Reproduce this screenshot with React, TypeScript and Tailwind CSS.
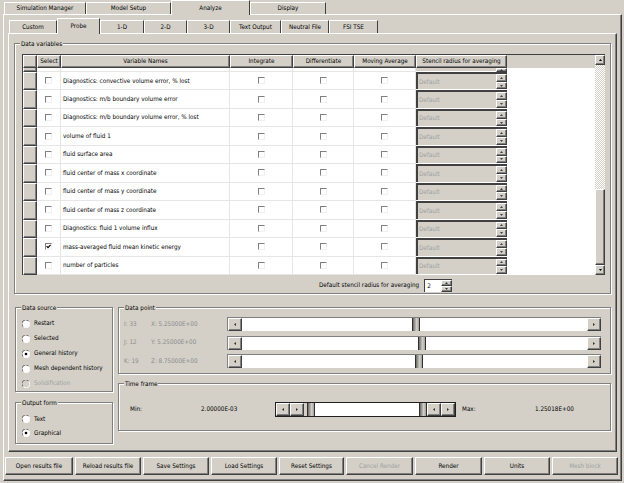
import React from "react";

const raised =
  "border border-t-white border-l-white border-r-[#404040] border-b-[#404040] shadow-[inset_-1px_-1px_0_#808080]";

const variables = [
  "Diagnostics: convective volume error, % lost",
  "Diagnostics: m/b boundary volume error",
  "Diagnostics: m/b boundary volume error, % lost",
  "volume of fluid 1",
  "fluid surface area",
  "fluid center of mass x coordinate",
  "fluid center of mass y coordinate",
  "fluid center of mass z coordinate",
  "Diagnostics: fluid 1 volume influx",
  "mass-averaged fluid mean kinetic energy",
  "number of particles",
];

const mainTabs = [
  { label: "Simulation Manager", w: "w-[82px]" },
  { label: "Model Setup", w: "w-[85px]" },
  { label: "Analyze", w: "w-[79px]", active: true },
  { label: "Display", w: "w-[76px]" },
];

const subTabs = [
  { label: "Custom", w: "w-[48px]" },
  { label: "Probe", w: "w-[43px]", active: true },
  { label: "1-D", w: "w-[44px]" },
  { label: "2-D", w: "w-[43px]" },
  { label: "3-D", w: "w-[43px]" },
  { label: "Text Output", w: "w-[51px]" },
  { label: "Neutral File", w: "w-[48px]" },
  { label: "FSI TSE", w: "w-[49px]" },
];

const buttons = [
  { label: "Open results file", w: "w-[68px]" },
  { label: "Reload results file", w: "w-[66px]" },
  { label: "Save Settings", w: "w-[66px]" },
  { label: "Load Settings", w: "w-[66px]" },
  { label: "Reset Settings", w: "w-[65px]" },
  { label: "Cancel Render", w: "w-[67px]", disabled: true },
  { label: "Render", w: "w-[67px]" },
  { label: "Units", w: "w-[66px]" },
  { label: "Mesh block", w: "w-[66px]", disabled: true },
];

// small triangles used on scroll / spin buttons
function Tri({
  dir,
  small,
  color = "#000",
}: {
  dir: "up" | "down" | "left" | "right";
  small?: boolean;
  color?: string;
}) {
  const horiz = dir === "up" || dir === "down";
  const a = small ? 3 : 5;
  const b = small ? 2 : 3;
  const d = {
    up: `M0 ${b} L${a / 2} 0 L${a} ${b} Z`,
    down: `M0 0 L${a} 0 L${a / 2} ${b} Z`,
    left: `M${b} 0 L${b} ${a} L0 ${a / 2} Z`,
    right: `M0 0 L${b} ${a / 2} L0 ${a} Z`,
  }[dir];
  const w = horiz ? a : b;
  const h = horiz ? b : a;
  return (
    <svg width={w} height={h} viewBox={`0 0 ${w} ${h}`}>
      <path d={d} fill={color} />
    </svg>
  );
}

function Check({ checked }: { checked?: boolean }) {
  return (
    <span className="relative block h-[7px] w-[7px] border border-t-[#808080] border-l-[#808080] border-r-[#f0f0f0] border-b-[#f0f0f0] bg-white">
      {checked && (
        <svg className="absolute left-0 top-0" width="5" height="5" viewBox="0 0 5 5">
          <path d="M0.6 2.2 L2 3.6 L4.6 0.8" stroke="#000" strokeWidth="1.2" fill="none" />
        </svg>
      )}
    </span>
  );
}

function Radio({ on, disabled }: { on?: boolean; disabled?: boolean }) {
  return (
    <svg width="8" height="8" viewBox="0 0 8 8" className="shrink-0">
      <circle cx="4" cy="4" r="3.5" fill={disabled ? "#d4d0c8" : "#fff"} />
      <path d="M1 6.5 A3.5 3.5 0 0 1 6.5 1" stroke="#707070" strokeWidth="1" fill="none" />
      <path d="M6.8 1.6 A3.5 3.5 0 0 1 1.6 6.8" stroke="#fff" strokeWidth="1" fill="none" />
      {on && <circle cx="4" cy="4" r="1.3" fill="#000" />}
    </svg>
  );
}

function Spin() {
  return (
    <div className="flex h-full w-[11px] shrink-0 flex-col">
      <div className={`flex flex-1 items-center justify-center bg-[#d4d0c8] ${raised}`}>
        <Tri dir="up" small color="#404040" />
      </div>
      <div className={`flex flex-1 items-center justify-center bg-[#d4d0c8] ${raised}`}>
        <Tri dir="down" small color="#404040" />
      </div>
    </div>
  );
}

function Group({
  label,
  className,
  children,
}: {
  label: string;
  className: string;
  children?: React.ReactNode;
}) {
  return (
    <div
      className={`relative border border-[#808080] shadow-[inset_1px_1px_0_#fff,1px_1px_0_#fff] ${className}`}
    >
      <span className="absolute -top-[4px] left-[5px] bg-[#d4d0c8] px-[1px] leading-[7px]">
        {label}
      </span>
      {children}
    </div>
  );
}

function ArrowBtn({ dir }: { dir: "left" | "right" }) {
  return (
    <div className={`flex h-full w-[14px] shrink-0 items-center justify-center bg-[#d4d0c8] ${raised}`}>
      <Tri dir={dir} small color="#303030" />
    </div>
  );
}

function Thumb() {
  return (
    <div className="h-full w-[8px] shrink-0 border-x border-[#303030] bg-[linear-gradient(90deg,#6a6a6a,#d4d0c8_60%,#a0a0a0)]" />
  );
}

function AxisRow({ idx, coord, thumb }: { idx: string; coord: string; thumb: string }) {
  return (
    <div className="flex h-[14px] items-center text-[#8a8a8a]">
      <span className="w-[32px] pl-[5px]">{idx}</span>
      <span className="w-[76px]">{coord}</span>
      <div className="flex h-full w-[374px] border-t border-l border-[#808080]">
        <ArrowBtn dir="left" />
        <div className="flex flex-1 bg-white">
          <div className={thumb} />
          <Thumb />
        </div>
        <ArrowBtn dir="right" />
      </div>
    </div>
  );
}

function StencilCell({ partial }: { partial?: boolean }) {
  return (
    <div className="w-[91px] shrink-0 bg-white pb-[1px]">
      <div
        className={`flex h-full bg-[#d4d0c8] ${
          partial ? "" : "border-t-2 border-l-2 border-[#404040]"
        }`}
      >
        <span className="flex flex-1 items-center pl-[1px] text-[#a0a0a0]">
          {partial ? "" : "Default"}
        </span>
        <Spin />
      </div>
    </div>
  );
}

function Row({ name, checked }: { name: string; checked?: boolean }) {
  const cell = "flex items-center justify-center border-r border-b border-[#e6e6e6] bg-white";
  return (
    <div className="flex h-[18.5px]">
      <div className={`w-[14px] shrink-0 bg-[#d4d0c8] ${raised}`} />
      <div className={`w-[24px] shrink-0 ${cell}`}>
        <Check checked={checked} />
      </div>
      <div className={`w-[169px] shrink-0 !justify-start pl-[2px] ${cell}`}>{name}</div>
      <div className={`w-[63px] shrink-0 ${cell}`}>
        <Check />
      </div>
      <div className={`w-[61px] shrink-0 ${cell}`}>
        <Check />
      </div>
      <div className={`w-[62px] shrink-0 ${cell}`}>
        <Check />
      </div>
      <StencilCell />
      <div className="flex-1 bg-white" />
    </div>
  );
}

export default function App() {
  const head = `flex items-center justify-center bg-[#d4d0c8] ${raised}`;
  return (
    <div className="h-[483px] w-[624px] overflow-hidden bg-[#d4d0c8] font-['DejaVu_Sans_Condensed','DejaVu_Sans',sans-serif] text-[6.3px] leading-none text-black">
      {/* main tabs */}
      <div className="ml-[4px] flex h-[14px] items-end">
        {mainTabs.map((t) =>
          t.active ? (
            <div
              key={t.label}
              className={`relative z-10 -mb-[1px] flex h-[15px] items-center justify-center border-t border-l border-r border-t-white border-l-white border-r-[#404040] bg-[#d4d0c8] ${t.w}`}
            >
              {t.label}
            </div>
          ) : (
            <div
              key={t.label}
              className={`flex h-[12px] items-center justify-center border-t border-l border-r border-t-white border-l-white border-r-[#404040] ${t.w}`}
            >
              {t.label}
            </div>
          )
        )}
      </div>

      {/* outer panel */}
      <div className={`ml-[3px] h-[467px] w-[619px] ${raised}`}>
        {/* sub tabs */}
        <div className="ml-[5px] mt-[3px] flex h-[15px] items-end">
          {subTabs.map((t) =>
            t.active ? (
              <div
                key={t.label}
                className={`relative z-10 -mb-[1px] flex h-[16px] items-center justify-center border-t border-l border-r border-t-white border-l-white border-r-[#404040] bg-[#d4d0c8] ${t.w}`}
              >
                {t.label}
              </div>
            ) : (
              <div
                key={t.label}
                className={`flex h-[13px] items-center justify-center border-t border-l border-r border-t-white border-l-white border-r-[#404040] ${t.w}`}
              >
                {t.label}
              </div>
            )
          )}
        </div>

        {/* sub panel */}
        <div className={`ml-[4px] h-[419px] w-[609px] ${raised}`}>
          <Group label="Data variables" className="ml-[5px] mt-[9px] h-[251px] w-[597px]">
            {/* table */}
            <div className="ml-[7px] mt-[10px] flex h-[221px] w-[583px] border-t border-l border-[#404040]">
              <div className="flex flex-1 flex-col overflow-hidden">
                <div className="flex h-[13px] shrink-0">
                  <div className={`w-[14px] ${head}`} />
                  <div className={`w-[24px] ${head}`}>Select</div>
                  <div className={`w-[169px] ${head}`}>Variable Names</div>
                  <div className={`w-[63px] ${head}`}>Integrate</div>
                  <div className={`w-[61px] ${head}`}>Differentiate</div>
                  <div className={`w-[62px] ${head}`}>Moving Average</div>
                  <div className={`w-[91px] ${head}`}>Stencil radius for averaging</div>
                  <div className="flex-1 bg-[#d4d0c8]" />
                </div>
                <div className="flex h-[4px] shrink-0">
                  <div className={`w-[14px] bg-[#d4d0c8] ${raised} border-t-0`} />
                  <div className="w-[24px] border-r border-b border-[#e6e6e6] bg-white" />
                  <div className="w-[169px] border-r border-b border-[#e6e6e6] bg-white" />
                  <div className="w-[63px] border-r border-b border-[#e6e6e6] bg-white" />
                  <div className="w-[61px] border-r border-b border-[#e6e6e6] bg-white" />
                  <div className="w-[62px] border-r border-b border-[#e6e6e6] bg-white" />
                  <StencilCell partial />
                  <div className="flex-1 bg-white" />
                </div>
                {variables.map((v, i) => (
                  <Row key={v} name={v} checked={i === 9} />
                ))}
              </div>
              {/* vertical scrollbar */}
              <div className="flex w-[10px] shrink-0 flex-col bg-[repeating-conic-gradient(#d4d0c8_0_25%,#ffffff_0_50%)] bg-[length:2px_2px]">
                <div className={`flex h-[10px] shrink-0 items-center justify-center bg-[#d4d0c8] ${raised}`}>
                  <Tri dir="up" small />
                </div>
                <div className="h-[124px] shrink-0" />
                <div className={`flex-1 bg-[#d4d0c8] ${raised}`} />
                <div className={`flex h-[10px] shrink-0 items-center justify-center bg-[#d4d0c8] ${raised}`}>
                  <Tri dir="down" small />
                </div>
              </div>
            </div>
            <div className="mt-[4px] flex h-[13px] items-center">
              <span className="ml-[304px]">Default stencil radius for averaging</span>
              <div className="ml-[5px] flex h-full w-[28px] border-t border-l border-[#404040] bg-white">
                <span className="flex flex-1 items-center pl-[2px]">2</span>
                <Spin />
              </div>
            </div>
          </Group>

          <div className="mt-[13px] flex">
            {/* left column */}
            <div className="ml-[6px] flex w-[98px] flex-col">
              <Group label="Data source" className="h-[85px] w-full">
                <div className="flex flex-col pl-[6px] pt-[8px]">
                  {[
                    { l: "Restart" },
                    { l: "Selected" },
                    { l: "General history", on: true },
                    { l: "Mesh dependent history" },
                    { l: "Solidification", disabled: true },
                  ].map((r) => (
                    <div key={r.l} className="flex h-[15px] items-center gap-[4px]">
                      <Radio on={r.on} disabled={r.disabled} />
                      <span className={r.disabled ? "text-[#a0a0a0]" : ""}>{r.l}</span>
                    </div>
                  ))}
                </div>
              </Group>
              <Group label="Output form" className="mt-[10px] h-[42px] w-full">
                <div className="flex flex-col pl-[6px] pt-[9px]">
                  <div className="flex h-[14px] items-center gap-[4px]">
                    <Radio />
                    <span>Text</span>
                  </div>
                  <div className="flex h-[14px] items-center gap-[4px]">
                    <Radio on />
                    <span>Graphical</span>
                  </div>
                </div>
              </Group>
            </div>

            {/* right column */}
            <div className="ml-[5px] flex w-[493px] flex-col">
              <Group label="Data point" className="h-[67px] w-full">
                <div className="flex flex-col gap-[4.5px] pt-[9px]">
                  <AxisRow idx="I: 33" coord="X: 5.25000E+00" thumb="w-[170px]" />
                  <AxisRow idx="J: 12" coord="Y: 5.25000E+00" thumb="w-[176px]" />
                  <AxisRow idx="K: 19" coord="Z: 8.75000E+00" thumb="w-[173px]" />
                </div>
              </Group>
              <Group label="Time frame" className="mt-[9px] h-[48px] w-full">
                <div className="mt-[18px] flex h-[15px] items-center">
                  <span className="w-[82px] pl-[11px]">Min:</span>
                  <span className="w-[74px]">2.00000E-03</span>
                  <div className="flex h-full w-[181px] border border-[#202020]">
                    <ArrowBtn dir="left" />
                    <ArrowBtn dir="right" />
                    <div className="w-[3px] shrink-0 bg-[#d4d0c8]" />
                    <Thumb />
                    <div className="flex-1 bg-white" />
                    <Thumb />
                    <ArrowBtn dir="left" />
                    <ArrowBtn dir="right" />
                  </div>
                  <span className="ml-[6px] w-[73px]">Max:</span>
                  <span>1.25018E+00</span>
                </div>
              </Group>
            </div>
          </div>
        </div>

        {/* bottom buttons */}
        <div className="ml-[1px] mt-[5px] flex h-[18px] gap-[2px]">
          {buttons.map((b) => (
            <div
              key={b.label}
              className={`flex items-center justify-center bg-[#d4d0c8] ${raised} ${b.w} ${
                b.disabled ? "text-[#a0a0a0]" : ""
              }`}
            >
              {b.label}
            </div>
          ))}
        </div>
      </div>
    </div>
  );
}
